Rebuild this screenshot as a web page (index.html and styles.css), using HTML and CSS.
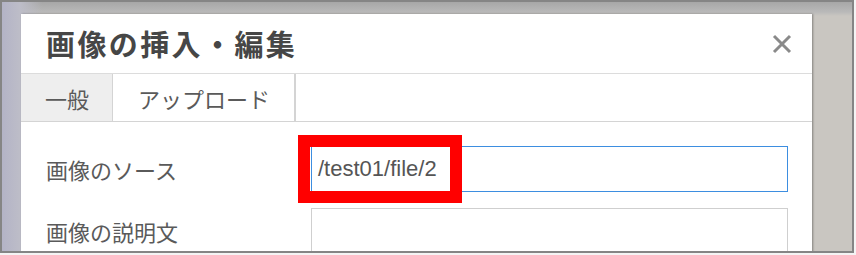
FILE: index.html
```html
<!DOCTYPE html>
<html lang="ja">
<head>
<meta charset="utf-8">
<link rel="stylesheet" href="styles.css">
</head>
<body>
<div class="frame">
  <div class="dialog">
    <div class="header">
      <h1 class="title">画像の挿入・編集</h1>
      <svg class="close" width="20" height="20" viewBox="0 0 20 20"><path d="M2 2 L18 18 M18 2 L2 18" stroke="#8a8a8a" stroke-width="3" fill="none"/></svg>
    </div>
    <div class="tabs">
      <div class="tab active">一般</div>
      <div class="tab">アップロード</div>
    </div>
    <div class="form">
      <div class="row">
        <div class="label">画像のソース</div>
        <div class="field">
          <div class="input focus">/test01/file/2</div>
          <div class="mark"></div>
        </div>
      </div>
      <div class="row">
        <div class="label">画像の説明文</div>
        <div class="field">
          <div class="input"></div>
        </div>
      </div>
    </div>
  </div>
</div>
</body>
</html>
```

FILE: styles.css
```css
html, body {
  margin: 0;
  padding: 0;
  background: #f4f4f4;
}
.frame {
  box-sizing: border-box;
  width: 854px;
  height: 253px;
  border: 2px solid #858585;
  overflow: hidden;
  background:
    linear-gradient(90deg, #b3b3c6 0px, #bdbdc8 18px, rgba(0,0,0,0) 40px),
    linear-gradient(180deg, #a7a7a7 0px, #b9b9b9 10px, #c9c6c1 14px),
    #c9c6c1;
  padding: 12px 0 0 19px;
  font-family: "Noto Sans CJK JP", "Noto Sans", sans-serif;
}
.dialog {
  width: 791px;
  height: 260px;
  background: #fff;
  box-shadow: 1px 0 2px rgba(0,0,0,0.35);
}
.header {
  height: 59px;
  border-bottom: 1px solid #dcdcdc;
  display: flex;
  align-items: center;
  justify-content: space-between;
  padding: 0 20px 0 25px;
}
.title {
  margin: 0;
  font-size: 29px;
  font-weight: bold;
  color: #464646;
  letter-spacing: 2.4px;
  line-height: 1;
}
.close {
  display: block;
}
.tabs {
  display: flex;
  height: 47px;
  border-bottom: 1px solid #d4d4d4;
}
.tab {
  display: flex;
  align-items: center;
  padding: 0 24px 0 25px;
  font-size: 22px;
  color: #5a5a5a;
  border-right: 2px solid #d4d4d4;
}
.tab.active {
  background: #eeeeee;
  padding: 0 23px 0 24px;
  border-right-width: 1px;
}
.form {
  padding: 24px 24px 0 25px;
  display: flex;
  flex-direction: column;
  gap: 16px;
}
.row {
  display: flex;
  align-items: center;
}
.label {
  width: 265px;
  font-size: 22px;
  color: #5a5a5a;
}
.field {
  position: relative;
  flex: 1;
}
.input {
  box-sizing: border-box;
  height: 46px;
  border: 1px solid #cfcfcf;
  padding: 0 6px;
  display: flex;
  align-items: center;
  font-family: "Liberation Sans", Arial, sans-serif;
  font-size: 22px;
  color: #555;
}
.input.focus {
  border-color: #3d8ee0;
}
.mark {
  position: absolute;
  left: -13px;
  top: -11px;
  width: 164px;
  height: 68px;
  box-sizing: border-box;
  border: 12px solid #ff0000;
}
```
